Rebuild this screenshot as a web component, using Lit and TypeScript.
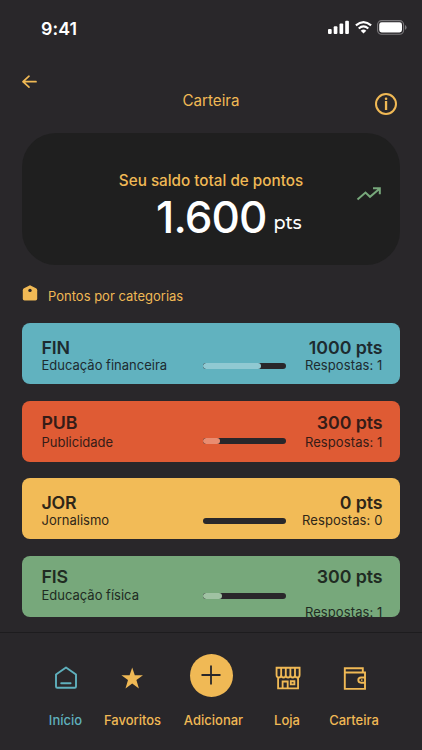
import { LitElement, html, css, svg, nothing } from "lit";
import { customElement, property } from "lit/decorators.js";

@customElement("category-card")
class CategoryCard extends LitElement {
  static styles = css`
    :host { display: block; height: 61px; border-radius: 8px; overflow: hidden; color: #29272a; }
    :host([tone="blue"]) { background: #61b2bf; --fill: #90c9d2; --ink: #1d2b30; }
    :host([tone="red"]) { background: #df5b34; --fill: #e98c70; --ink: #351c17; }
    :host([tone="yellow"]) { background: #f2bb57; --fill: #f7d596; --ink: #2f2618; }
    :host([tone="green"]) { background: #77a87b; --fill: #a0c2a3; --ink: #202b22; }
    .row { display: grid; grid-template-columns: 161px 83px 1fr; padding: 14.5px 17.5px 0 19.5px; color: var(--ink); }
    :host([tone="red"]) .row { padding-top: 12.3px; }
    :host([tone="yellow"]) .row { padding-top: 14.4px; }
    :host([tone="green"]) .row { padding-top: 11px; }
    .title { font-size: 17.8px; line-height: 20px; font-weight: 580; letter-spacing: -0.2px; white-space: nowrap; }
    .pts { letter-spacing: -0.07px; }
    .sub { font-size: 13px; line-height: 16px; margin-top: -0.8px; white-space: nowrap; }
    .end .sub { letter-spacing: 0.1px; }
    :host([tone="red"]) .sub { margin-top: 1px; }
    :host([tone="green"]) .sub { margin-top: 0; }
    :host([tone="green"]) .end .sub { margin-top: 16.6px; }
    .end { text-align: right; }
    .track { height: 6px; border-radius: 3px; background: #29272a; margin: 25.5px 0 0; overflow: hidden; }
    :host([tone="red"]) .track { margin-top: 24.7px; }
    :host([tone="green"]) .track { margin-top: 26px; }
    .fill { height: 100%; border-radius: 3px; background: var(--fill); }
  `;
  @property() code = "";
  @property() name = "";
  @property({ type: Number }) points = 0;
  @property({ type: Number }) answers = 0;
  @property({ type: Number }) progress = 0;
  render() {
    return html`<div class="row">
      <div><div class="title">${this.code}</div><div class="sub">${this.name}</div></div>
      <div class="track">${this.progress ? html`<div class="fill" style="width:${this.progress}%"></div>` : nothing}</div>
      <div class="end"><div class="title pts">${this.points} pts</div><div class="sub">Respostas: ${this.answers}</div></div>
    </div>`;
  }
}

const categories = [
  { tone: "blue", code: "FIN", name: "Educação financeira", points: 1000, answers: 1, progress: 70 },
  { tone: "red", code: "PUB", name: "Publicidade", points: 300, answers: 1, progress: 20.5 },
  { tone: "yellow", code: "JOR", name: "Jornalismo", points: 0, answers: 0, progress: 0 },
  { tone: "green", code: "FIS", name: "Educação física", points: 300, answers: 1, progress: 23.5 },
];

const icons = {
  home: svg`<path d="M2 8.5 L12 1.5 L22 8.5 V20.5 Q22 21.8 20.7 21.8 H3.3 Q2 21.8 2 20.5 Z M7.2 17.2 H16.6" fill="none" stroke="currentColor" stroke-width="1.9" stroke-linecap="round" stroke-linejoin="round"/>`,
  star: svg`<path transform="translate(-0.8 0)" d="M12 1.5 L14.6 9.3 H22.8 L16.2 14 L18.7 22.6 L12 17.4 L5.3 22.6 L7.8 14 L1.2 9.3 H9.4 Z" fill="currentColor"/>`,
  shop: svg`<g transform="translate(1.6 0) scale(0.96 1)" fill="none" stroke="currentColor" stroke-width="1.9"><path d="M1 1.8 H25 V9 Q25 11.5 22.7 11.5 Q20.2 11.5 20.2 9 Q20.2 11.5 17.8 11.5 Q15.4 11.5 15.4 9 Q15.4 11.5 13 11.5 Q10.6 11.5 10.6 9 Q10.6 11.5 8.2 11.5 Q5.8 11.5 5.8 9 Q5.8 11.5 3.4 11.5 Q1 11.5 1 9 Z M5.8 2 V9 M10.6 2 V9 M15.4 2 V9 M20.2 2 V9 M2.6 11 V22.4 H23.4 V11 M7.3 22.4 V15.5 H12.6 V22.4 M15.8 15.2 H19.6 V18.4 H15.8 Z"/></g>`,
  wallet: svg`<path transform="translate(0.6 0.3)" d="M20.2 6.2 V2 H2.2 V22.6 H22.4 V6.2 H2.2 M22.4 11.2 H18.5 Q15.7 11.2 15.7 13.8 Q15.7 16.4 18.5 16.4 H22.4 M18.6 13.8 H19.8" fill="none" stroke="currentColor" stroke-width="1.9"/>`,
};

@customElement("app-root")
class AppRoot extends LitElement {
  static styles = css`
    :host { display: flex; flex-direction: column; width: 422px; height: 750px; overflow: hidden; box-sizing: border-box; background: #29272a; color: #f0b955; font-family: Inter, "Liberation Sans", sans-serif; }
    svg { display: block; flex: none; overflow: visible; }
    .status { display: flex; justify-content: space-between; align-items: flex-start; height: 56px; padding: 18px 15px 0 41px; box-sizing: border-box; color: #fff; }
    .time { font-size: 17.8px; line-height: 22px; font-weight: 580; letter-spacing: 0.1px; }
    .signals { display: flex; gap: 6px; padding-top: 2px; }
    .battery { margin-left: -1px; }
    .header { display: grid; grid-template-columns: 60px 1fr 60px; height: 77px; padding: 0 22px; }
    .back { margin-top: 18px; }
    .info { margin: 36px 2px 0 auto; }
    .heading { margin-top: 35px; text-align: center; font-size: 15.2px; line-height: 20px; }
    .balance { height: 132px; margin: 0 22px; border-radius: 34px; background: #1f1f1f; display: grid; grid-template-columns: 1fr auto 1fr; }
    .amount { grid-column: 2; padding-top: 37.5px; }
    .caption { font-size: 15.25px; line-height: 20px; font-weight: 450; white-space: nowrap; }
    .sum { display: flex; justify-content: flex-end; align-items: baseline; gap: 7px; color: #fff; line-height: 52px; padding-right: 1.5px; }
    .value { font-size: 44px; font-weight: 500; letter-spacing: -0.9px; }
    .unit { font-family: Montserrat, Inter, sans-serif; font-size: 17.6px; font-weight: 500; line-height: 20px; position: relative; top: -4px; }
    .trend { margin: 53.5px 18px 0 auto; }
    .section { display: flex; height: 58px; padding: 20px 22px 0; box-sizing: border-box; gap: 10px; }
    .label { font-size: 13px; line-height: 18px; margin-top: 1.6px; }
    .list { display: flex; flex-direction: column; gap: 16.7px; padding: 0 22px; height: 309px; box-sizing: border-box; }
    .tabs { flex: 1; border-top: 1.5px solid #1d1c1e; display: flex; padding-left: 31px; }
    .tab { display: flex; flex-direction: column; align-items: center; flex: none; font-size: 13px; font-weight: 500; }
    .tab.active { color: #5fb0bd; font-weight: 450; }
    .glyph { height: 78px; display: flex; align-items: center; padding-top: 11px; box-sizing: border-box; }
    .glyph.main { padding-top: 7px; }
    .tab span { line-height: 18px; }
    .add { width: 43px; height: 43px; border-radius: 50%; background: #f0b955; color: #29272a; display: grid; place-items: center; margin: 0 5px 1px 0; }
  `;
  tab(name: string, width: number, icon: unknown, w = 24, active = false) {
    return html`<div class="tab ${active ? "active" : ""}" style="width:${width}px">
      <div class="glyph"><svg width=${w} height="24" viewBox="0 0 ${w} 24">${icon}</svg></div><span>${name}</span></div>`;
  }
  render() {
    return html`
      <div class="status">
        <div class="time">9:41</div>
        <div class="signals">
          <svg width="21" height="14" viewBox="0 0 21 14" fill="#fff"><rect x="0" y="9" width="3.7" height="5" rx="1"/><rect x="5.7" y="6.3" width="3.7" height="7.7" rx="1"/><rect x="11.5" y="3.6" width="3.7" height="10.4" rx="1"/><rect x="17.2" y="0.8" width="3.7" height="13.2" rx="1"/></svg>
          <svg width="17" height="14" viewBox="0 0 17 14"><g fill="none" stroke="#fff" stroke-width="2.2"><path d="M0.9 5.4 Q8.5 -1 16.1 5.4"/><path d="M3.7 8.5 Q8.5 4.4 13.3 8.5"/></g><path d="M5.7 10.7 Q8.5 8.4 11.3 10.7 L8.5 13.5 Z" fill="#fff"/></svg>
          <svg class="battery" width="30" height="15" viewBox="0 0 30 15"><rect x="0.6" y="0.6" width="26" height="13.6" rx="4" fill="none" stroke="#7b797c" stroke-width="1.1"/><rect x="2.2" y="2.3" width="22.8" height="10.2" rx="2.4" fill="#fff"/><path d="M28 5 Q29.6 5.7 29.6 7.4 Q29.6 9.1 28 9.8 Z" fill="#7b797c"/></svg>
        </div>
      </div>
      <div class="header">
        <svg class="back" width="15" height="15" viewBox="0 0 15 15"><path d="M14 7.7 H1 M7 2.2 L1 7.7 L7 13.2" fill="none" stroke="currentColor" stroke-width="1.7" stroke-linecap="round" stroke-linejoin="round"/></svg>
        <div class="heading">Carteira</div>
        <svg class="info" width="24" height="24" viewBox="0 0 24 24"><circle cx="12" cy="12" r="10" fill="none" stroke="currentColor" stroke-width="2"/><rect x="10.9" y="9" width="2.3" height="9" fill="currentColor"/><rect x="10.8" y="5.4" width="2.5" height="2.5" rx="1" fill="currentColor"/></svg>
      </div>
      <div class="balance">
        <div class="amount">
          <div class="caption">Seu saldo total de pontos</div>
          <div class="sum"><span class="value">1.600</span><span class="unit">pts</span></div>
        </div>
        <svg class="trend" width="26" height="14" viewBox="0 0 26 14"><path d="M1.5 12.5 L9.5 5.5 L14 9.8 L23.5 1.8 M17 1.3 H23.8 V7.3" fill="none" stroke="#77a87b" stroke-width="2"/></svg>
      </div>
      <div class="section">
        <svg width="16" height="16" viewBox="0 0 16 16"><path d="M8 0.2 L14 3.3 Q15.2 4 15.2 5.2 V13.8 Q15.2 15.5 13.5 15.5 H2.5 Q0.8 15.5 0.8 13.8 V5.2 Q0.8 4 2 3.3 Z" fill="currentColor"/><circle cx="8" cy="5.4" r="1.7" fill="#29272a"/></svg>
        <div class="label">Pontos por categorias</div>
      </div>
      <div class="list">${categories.map((c) => html`<category-card tone=${c.tone} .code=${c.code} .name=${c.name} .points=${c.points} .answers=${c.answers} .progress=${c.progress}></category-card>`)}</div>
      <div class="tabs">
        ${this.tab("Início", 69, icons.home, 24, true)}
        ${this.tab("Favoritos", 65, icons.star)}
        <div class="tab" style="width:97px">
          <div class="glyph main"><div class="add"><svg width="20" height="20" viewBox="0 0 20 20"><path d="M10 0.5 V19.5 M0.5 10 H19.5" stroke="currentColor" stroke-width="1.8"/></svg></div></div><span>Adicionar</span>
        </div>
        ${this.tab("Loja", 50, icons.shop, 26)}
        ${this.tab("Carteira", 84, icons.wallet)}
      </div>`;
  }
}
